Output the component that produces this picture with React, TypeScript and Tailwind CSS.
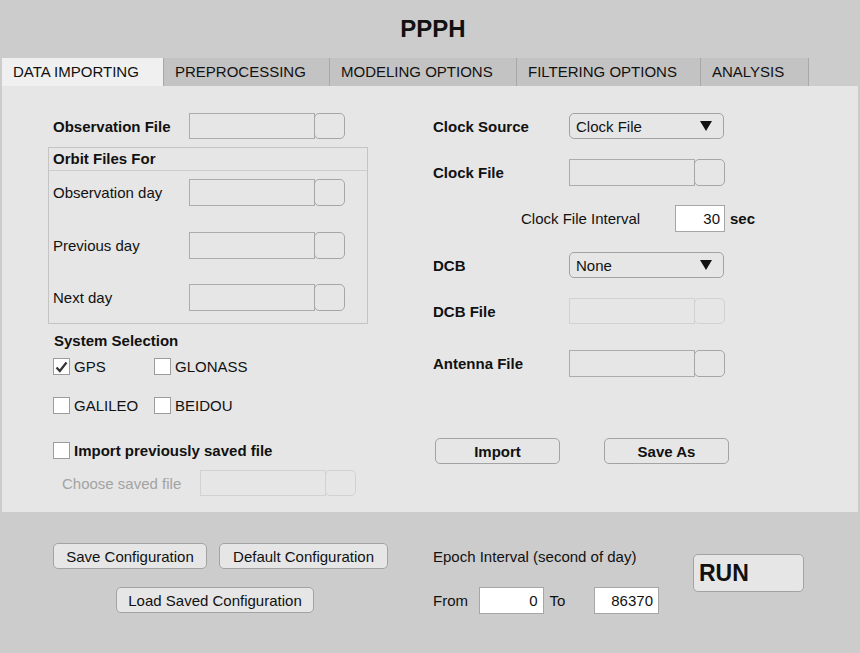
import React from "react";

const tabs = [
  { label: "DATA IMPORTING", w: "w-[162px]", active: true },
  { label: "PREPROCESSING", w: "w-[166px]" },
  { label: "MODELING OPTIONS", w: "w-[187px]" },
  { label: "FILTERING OPTIONS", w: "w-[184px]" },
  { label: "ANALYSIS", w: "w-[108px]" },
];

const FileField = ({ disabled = false, h = "h-[27px]" }: { disabled?: boolean; h?: string }) => (
  <div className="flex">
    <div className={`w-[126px] ${h} border ${disabled ? "border-[#d2d2d2]" : "border-[#acacac]"}`} />
    <div className={`w-[31px] ${h} -ml-px rounded-[5px] border ${disabled ? "border-[#d2d2d2]" : "border-[#a6a6a6]"}`} />
  </div>
);

const Dropdown = ({ value }: { value: string }) => (
  <div className="w-[155px] h-[26px] rounded-[5px] border border-[#a3a3a3] flex items-center justify-between pl-[6px] pr-[11px] text-[15px]">
    <span className="pt-[2px]">{value}</span>
    <svg width="12" height="10" viewBox="0 0 12 10">
      <polygon points="0,0 12,0 6,10" fill="#111" />
    </svg>
  </div>
);

const Check = ({ checked = false }: { checked?: boolean }) => (
  <div className="w-[17px] h-[17px] bg-white border border-[#9c9c9c] flex items-center justify-center">
    {checked && (
      <svg width="13" height="12" viewBox="0 0 13 12">
        <path d="M1.5 6.5 L4.8 10 L11.5 1.5" fill="none" stroke="#333" strokeWidth="2.2" />
      </svg>
    )}
  </div>
);

const Btn = ({ children, className = "" }: { children: React.ReactNode; className?: string }) => (
  <div
    className={`h-[26px] rounded-[5px] border border-[#a3a3a3] bg-[#e6e6e6] flex items-center justify-center pt-[2px] text-[15px] ${className}`}
  >
    {children}
  </div>
);

export default function App() {
  return (
    <div className="w-[860px] h-[653px] bg-[#cccccc] text-[#111] font-['Liberation_Sans',Arial,sans-serif] flex flex-col overflow-hidden">
      {/* title */}
      <div className="h-[58px] flex items-center justify-center pl-[6px]">
        <h1 className="text-[24px] font-bold">PPPH</h1>
      </div>

      {/* tabs */}
      <div className="flex h-[28px] pl-[2px]">
        {tabs.map((t) => (
          <div
            key={t.label}
            className={`${t.w} h-full border-r border-[#a8a8a8] flex items-center pl-[11px] text-[15px] ${
              t.active ? "bg-[#f0f0f0]" : "bg-[#c3c3c3]"
            }`}
          >
            {t.label}
          </div>
        ))}
      </div>

      {/* panel */}
      <div className="mx-[2px] h-[426px] bg-[#e6e6e6] flex pl-[46px] text-[15px]">
        {/* left column */}
        <div className="w-[320px] flex flex-col">
          <div className="mt-[27px] flex items-center h-[26px]">
            <span className="w-[141px] pl-[5px] pt-[2px] font-bold">Observation File</span>
            <FileField h="h-[26px]" />
          </div>

          <div className="mt-[8px] h-[177px] border border-[#c4c4c4] flex flex-col">
            <div className="h-[23px] border-b border-[#cdcdcd] flex items-center pl-[4px] pt-[1px] font-bold">Orbit Files For</div>
            <div className="mt-[8px] flex items-center">
              <span className="w-[140px] pl-[4px] pt-[2px]">Observation day</span>
              <FileField />
            </div>
            <div className="mt-[26px] flex items-center">
              <span className="w-[140px] pl-[4px] pt-[2px]">Previous day</span>
              <FileField />
            </div>
            <div className="mt-[25px] flex items-center">
              <span className="w-[140px] pl-[4px] pt-[2px]">Next day</span>
              <FileField />
            </div>
          </div>

          <div className="mt-[8px] pl-[6px] font-bold h-[17px] leading-[17px]">System Selection</div>
          <div className="mt-[9px] h-[17px] flex items-center pl-[5px]">
            <div className="w-[101px] flex items-center gap-[4px]">
              <Check checked />
              <span className="pt-[2px]">GPS</span>
            </div>
            <div className="flex items-center gap-[4px]">
              <Check />
              <span className="pt-[2px]">GLONASS</span>
            </div>
          </div>
          <div className="mt-[22px] h-[17px] flex items-center pl-[5px]">
            <div className="w-[101px] flex items-center gap-[4px]">
              <Check />
              <span className="pt-[2px]">GALILEO</span>
            </div>
            <div className="flex items-center gap-[4px]">
              <Check />
              <span className="pt-[2px]">BEIDOU</span>
            </div>
          </div>
          <div className="mt-[28px] h-[17px] flex items-center pl-[5px] gap-[4px]">
            <Check />
            <span className="pt-[2px] font-bold">Import previously saved file</span>
          </div>
          <div className="mt-[11px] h-[26px] flex items-center">
            <span className="w-[152px] pl-[14px] pt-[2px] text-[#a3a3a3]">Choose saved file</span>
            <FileField disabled h="h-[26px]" />
          </div>
        </div>

        {/* right column */}
        <div className="ml-[65px] flex flex-col">
          <div className="mt-[27px] flex items-center">
            <span className="w-[136px] pt-[2px] font-bold">Clock Source</span>
            <Dropdown value="Clock File" />
          </div>
          <div className="mt-[20px] flex items-center">
            <span className="w-[136px] pt-[2px] font-bold">Clock File</span>
            <FileField />
          </div>
          <div className="mt-[19px] flex items-center">
            <span className="w-[154px] ml-[88px] pt-[2px]">Clock File Interval</span>
            <div className="w-[50px] h-[27px] bg-white border border-[#a6a6a6] flex items-center justify-end pr-[4px] pt-[2px]">30</div>
            <span className="ml-[5px] pt-[2px] font-bold">sec</span>
          </div>
          <div className="mt-[20px] flex items-center">
            <span className="w-[136px] pt-[2px] font-bold">DCB</span>
            <Dropdown value="None" />
          </div>
          <div className="mt-[20px] flex items-center">
            <span className="w-[136px] pt-[2px] font-bold">DCB File</span>
            <FileField disabled h="h-[26px]" />
          </div>
          <div className="mt-[26px] flex items-center">
            <span className="w-[136px] pt-[2px] font-bold">Antenna File</span>
            <FileField />
          </div>
          <div className="mt-[61px] flex pl-[2px] gap-[44px]">
            <Btn className="w-[125px] font-bold">Import</Btn>
            <Btn className="w-[125px] font-bold">Save As</Btn>
          </div>
        </div>
      </div>

      {/* bottom bar */}
      <div className="flex-1 flex pt-[31px] pl-[53px] text-[15px]">
        <div className="w-[335px] flex flex-col">
          <div className="flex gap-[12px]">
            <Btn className="w-[155px]">Save Configuration</Btn>
            <Btn className="w-[170px]">Default Configuration</Btn>
          </div>
          <Btn className="mt-[18px] ml-[63px] w-[198px]">Load Saved Configuration</Btn>
        </div>

        <div className="ml-[45px] w-[226px] flex flex-col">
          <div className="h-[26px] flex items-center pt-[3px]">Epoch Interval (second of day)</div>
          <div className="mt-[18px] flex items-center">
            <span className="w-[46px] pt-[2px]">From</span>
            <div className="w-[65px] h-[27px] bg-white border border-[#a6a6a6] flex items-center justify-end pr-[5px] pt-[2px]">0</div>
            <span className="w-[51px] pl-[6px] pt-[2px]">To</span>
            <div className="w-[65px] h-[27px] bg-white border border-[#a6a6a6] flex items-center justify-end pr-[5px] pt-[2px]">86370</div>
          </div>
        </div>

        <div className="ml-[34px] mt-[11px] w-[111px] h-[38px] rounded-[5px] border border-[#a3a3a3] bg-[#e6e6e6] flex items-center pl-[5px] text-[23px] font-bold">
          RUN
        </div>
      </div>
    </div>
  );
}
